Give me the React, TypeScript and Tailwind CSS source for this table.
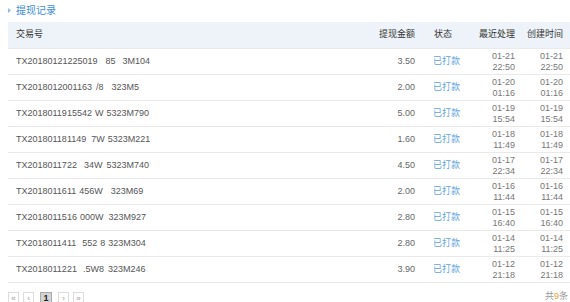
import React from "react";

type Seg = { t: string; cls: string };

const ids: Seg[][] = [
  [{ t: "TX20180121225019", cls: "" }, { t: "85", cls: "ml-[8px]" }, { t: "3M104", cls: "ml-[7px]" }],
  [{ t: "TX2018012001163", cls: "" }, { t: "/8", cls: "ml-[4px]" }, { t: "323M5", cls: "ml-[8px]" }],
  [{ t: "TX2018011915542", cls: "" }, { t: "W", cls: "ml-[3px]" }, { t: "5323M790", cls: "ml-[3px]" }],
  [{ t: "TX201801181149", cls: "" }, { t: "7W", cls: "ml-[5px]" }, { t: "5323M221", cls: "ml-[3px]" }],
  [{ t: "TX2018011722", cls: "" }, { t: "34W", cls: "ml-[7px]" }, { t: "5323M740", cls: "ml-[4px]" }],
  [{ t: "TX2018011611", cls: "" }, { t: "456W", cls: "ml-[3px]" }, { t: "323M69", cls: "ml-[8px]" }],
  [{ t: "TX2018011516", cls: "" }, { t: "000W", cls: "ml-[3px]" }, { t: "323M927", cls: "ml-[5px]" }],
  [{ t: "TX2018011411", cls: "" }, { t: "552", cls: "ml-[6px]" }, { t: "8", cls: "ml-[3px]" }, { t: "323M304", cls: "ml-[3px]" }],
  [{ t: "TX2018011221", cls: "" }, { t: ".5W8", cls: "ml-[6px]" }, { t: "323M246", cls: "ml-[4px]" }],
];

const rows = [
  { amt: "3.50", d: "01-21", t: "22:50" },
  { amt: "2.00", d: "01-20", t: "01:16" },
  { amt: "5.00", d: "01-19", t: "15:54" },
  { amt: "1.60", d: "01-18", t: "11:49" },
  { amt: "4.50", d: "01-17", t: "22:34" },
  { amt: "2.00", d: "01-16", t: "11:44" },
  { amt: "2.80", d: "01-15", t: "16:40" },
  { amt: "2.80", d: "01-14", t: "11:25" },
  { amt: "3.90", d: "01-12", t: "21:18" },
];

const grid = "grid grid-cols-[1fr_60px_47px_53px_49px] items-center";

export default function App() {
  return (
    <div
      className="w-[570px] h-[302px] overflow-hidden bg-white text-[9px] text-[#555]"
      style={{ fontFamily: '"Liberation Sans", Arial, "Noto Sans CJK SC", sans-serif' }}
    >
      <div className="h-[22px] pl-2 pb-[2px] flex items-center gap-[5px]">
        <svg width="3" height="5" viewBox="0 0 3 5">
          <path d="M0 0 L3 2.5 L0 5 Z" fill="#8dbde6" />
        </svg>
        <span className="text-[10px] text-[#3b8dd6]">提现记录</span>
      </div>
      <div className="pl-2">
        <div className={`${grid} h-[26px] bg-[#eef3f9] text-[#333]`}>
          <div className="pl-2">交易号</div>
          <div className="text-right pr-[6px]">提现金额</div>
          <div className="pl-[13px]">状态</div>
          <div className="text-right pr-[6px]">最近处理</div>
          <div className="text-right pr-[7px]">创建时间</div>
        </div>
        {rows.map((r, i) => (
          <div key={i} className={`${grid} h-[26px] border-t border-[#e9e9e9] first:border-t-0`}>
            <div className="pl-2 whitespace-nowrap flex">
              {ids[i].map((s, j) => (
                <span key={j} className={s.cls}>
                  {s.t}
                </span>
              ))}
            </div>
            <div className="text-right pr-[6px] text-[#666]">{r.amt}</div>
            <div className="pl-3 text-[#5fa3dc]">已打款</div>
            <div className="text-right pr-[6px] text-[#777] leading-[11px]">
              <div>{r.d}</div>
              <div>{r.t}</div>
            </div>
            <div className="text-right pr-[7px] text-[#777] leading-[11px]">
              <div>{r.d}</div>
              <div>{r.t}</div>
            </div>
          </div>
        ))}
        <div className="border-t border-[#e9e9e9]" />
        <div className="flex justify-between items-start pt-[9px] pr-[2px]">
          <div className="flex gap-[4px]">
            {["«", "‹", "1", "›", "»"].map((p, i) => (
              <div
                key={i}
                className={
                  p === "1"
                    ? "w-[12px] h-[13px] border border-[#aaa] bg-[#d4d4d4] text-[#222] font-bold flex items-center justify-center leading-none mx-[2px]"
                    : "w-[11px] h-[13px] border border-[#ddd] text-[#999] flex items-center justify-center leading-none text-[8px]"
                }
              >
                {p}
              </div>
            ))}
          </div>
          <div className="text-[#999] leading-[10px] -mt-[1px]">
            共<span className="text-[#f0a030]">9</span>条
          </div>
        </div>
      </div>
    </div>
  );
}
